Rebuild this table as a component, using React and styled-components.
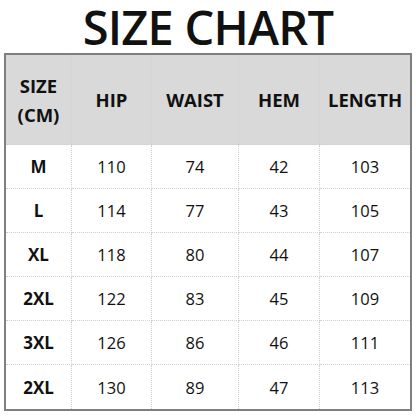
import React from 'react';
import styled, { createGlobalStyle } from 'styled-components';

const GlobalStyle = createGlobalStyle`
  body {
    margin: 0;
    background: #ffffff;
    font-family: "Open Sans", "Liberation Sans", sans-serif;
    color: #111111;
  }
`;

const Page = styled.div`
  width: 416px;
  height: 416px;
  padding: 0 4px;
  box-sizing: border-box;
  display: flex;
  flex-direction: column;
`;

const Title = styled.h1`
  margin: 0;
  height: 53px;
  padding-top: 2px;
  box-sizing: border-box;
  font-size: 47px;
  font-weight: 600;
  line-height: 51px;
  text-align: center;
  letter-spacing: -0.8px;
  color: #111111;
`;

const Table = styled.div`
  display: grid;
  grid-template-columns: 66px 80px 87px 81px 1fr;
  grid-template-rows: 90px repeat(6, 44px);
  border: 2px solid #7f7f7f;
  width: 408px;
  box-sizing: border-box;
`;

const Cell = styled.div`
  display: flex;
  align-items: center;
  justify-content: center;
  text-align: center;
  white-space: pre-line;
  font-size: ${(p) => (p.$head ? '18.5px' : p.$bold ? '17px' : '16.5px')};
  font-weight: ${(p) => (p.$bold ? 700 : 400)};
  line-height: 29px;
  background: ${(p) => (p.$head ? '#d9d9d9' : '#ffffff')};
  border-right: ${(p) => (p.$last ? 'none' : '1px dotted #d0d0d0')};
  border-bottom: ${(p) => (p.$bottom ? 'none' : '1px dotted #d0d0d0')};
  color: #111111;
`;

const headers = ['SIZE\n(CM)', 'HIP', 'WAIST', 'HEM', 'LENGTH'];

const rows = [
  ['M', '110', '74', '42', '103'],
  ['L', '114', '77', '43', '105'],
  ['XL', '118', '80', '44', '107'],
  ['2XL', '122', '83', '45', '109'],
  ['3XL', '126', '86', '46', '111'],
  ['2XL', '130', '89', '47', '113'],
];

const App = () => (
  <Page>
    <GlobalStyle />
    <Title>SIZE CHART</Title>
    <Table>
      {headers.map((h, i) => (
        <Cell key={h} $head $bold $last={i === 4}>
          {h}
        </Cell>
      ))}
      {rows.map((row, r) =>
        row.map((v, i) => (
          <Cell
            key={`${r}-${i}`}
            $bold={i === 0}
            $last={i === 4}
            $bottom={r === rows.length - 1}
          >
            {v}
          </Cell>
        ))
      )}
    </Table>
  </Page>
);

export default App;
